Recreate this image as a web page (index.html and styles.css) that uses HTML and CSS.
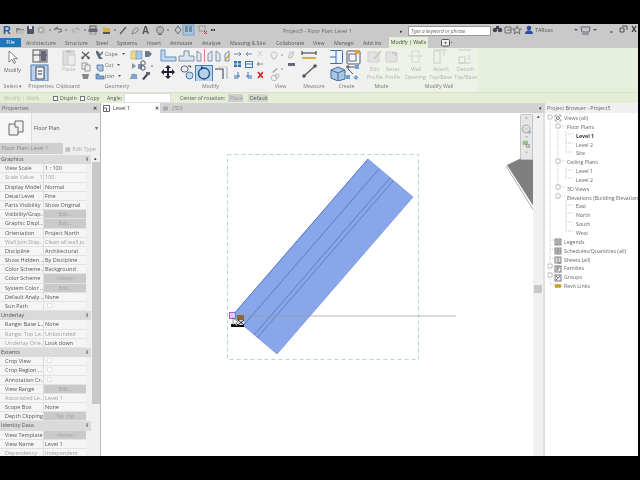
FILE: index.html
```html
<!DOCTYPE html>
<html lang="en">
<head>
<meta charset="utf-8">
<title>Project5 - Floor Plan: Level 1</title>
<link rel="stylesheet" href="styles.css">
</head>
<body>
<div class="app">
  <header class="titlebar">
    <svg class="qat" viewBox="0 24 225 13">
      <text x="3" y="34" class="logo">R</text>
      <path d="M16 28h3l1 1h4v1h-6l-2 4z" fill="#888"/><path d="M18 30h7l-2 4h-7z" fill="#bbb"/>
      <rect x="27" y="26" width="7" height="8" rx="1" fill="#4a5568"/><rect x="29" y="26" width="3" height="3" fill="#ddd"/>
      <circle cx="41" cy="30" r="3.6" fill="#aaa"/><circle cx="41" cy="30" r="1.4" fill="#ddd"/>
      <circle cx="50" cy="30" r=".8" fill="#555"/>
      <path d="M54 30l3-2.500v1.500h3c2 0 2 3 0 3h-2" fill="none" stroke="#667" stroke-width="1.100"/>
      <circle cx="66" cy="30" r=".8" fill="#555"/>
      <path d="M80 30l-3-2.500v1.500h-3c-2 0-2 3 0 3h2" fill="none" stroke="#aaa" stroke-width="1.100"/>
      <circle cx="85" cy="30" r=".8" fill="#555"/>
      <rect x="90" y="26" width="6" height="3" fill="none" stroke="#555"/><rect x="88.500" y="29" width="9" height="3" fill="#667"/><rect x="90" y="32" width="6" height="2" fill="#ddd" stroke="#555" stroke-width=".5"/>
      <path d="M103 27l4 1h3v5h-7z" fill="#d4b24a"/><rect x="103" y="32" width="7" height="2" fill="#555"/>
      <circle cx="115" cy="30" r=".8" fill="#555"/>
      <path d="M120 34l6-7" stroke="#555" stroke-width="1.200"/>
      <path d="M132 34l1-3c2-5 7-3 5 0l-3 2z" fill="none" stroke="#778" stroke-width=".9"/>
      <text x="142" y="34" class="qat-a">A</text>
      <circle cx="160" cy="30" r="3.500" fill="#bbb" stroke="#666" stroke-width=".8"/><path d="M158 34h4v1h-4z" fill="#666"/>
      <circle cx="168" cy="30" r=".8" fill="#555"/>
      <path d="M178 26l3 4-3 4-3-4z" fill="none" stroke="#667" stroke-width="1"/>
      <rect x="183" y="25" width="11" height="10" fill="#a9c6e6" stroke="#5f86b4" stroke-width=".6"/><path d="M185 27h3M185 29h3M185 31h3M189 27h3M189 29h3M189 31h3" stroke="#345" stroke-width=".9"/>
      <rect x="199" y="26" width="6" height="5" fill="#ccc" stroke="#777" stroke-width=".6"/><path d="M204 31l3 3M207 31l-3 3" stroke="#c33" stroke-width="1"/>
      <rect x="211" y="29" width="1.500" height="2" fill="#333"/><rect x="213.500" y="29" width="1.500" height="2" fill="#333"/>
    </svg>
    <span class="doc-title">Project5 - Floor Plan: Level 1</span>
    <span class="search-caret">▸</span>
    <span class="search">Type a keyword or phrase</span>
    <svg class="winctl" viewBox="492 24 146 13">
      <circle cx="496" cy="30" r="2.200" fill="#445"/><circle cx="501" cy="30" r="2.200" fill="#445"/><rect x="497" y="26" width="3" height="3" fill="#445"/>
      <path d="M506 27h6v6h-6zM508 30h4" fill="none" stroke="#556" stroke-width=".8"/>
      <path d="M518 26l1.300 3h3l-2.400 2 1 3-2.900-2-2.900 2 1-3-2.400-2h3z" fill="none" stroke="#556" stroke-width=".8"/>
      <circle cx="530" cy="28" r="2.300" fill="#2b4fa0"/><path d="M526 34c0-5 8-5 8 0z" fill="#2b4fa0"/>
      <text x="536" y="32" class="user">TARuss</text>
      <path d="M575 29l2 2 2-2z" fill="#556"/>
      <path d="M582 27h9l-1 5h-7zM583 34h7" fill="none" stroke="#667" stroke-width="1"/>
      <path d="M594 29l2 2 2-2z" fill="#556"/>
      <path d="M611 32h3" stroke="#444" stroke-width="1"/>
      <path d="M621 28h4v4h-4zM623 26h5v4" fill="none" stroke="#444" stroke-width=".9"/>
      <path d="M633 26l4 6M637 26l-4 6" stroke="#333" stroke-width="1.200"/>
    </svg>
  </header>

  <nav class="tabs">
    <span class="tab-file">File</span>
    <span class="tab t1">Architecture</span>
    <span class="tab t2">Structure</span>
    <span class="tab t3">Steel</span>
    <span class="tab t4">Systems</span>
    <span class="tab t5">Insert</span>
    <span class="tab t6">Annotate</span>
    <span class="tab t7">Analyze</span>
    <span class="tab t8">Massing &amp; Site</span>
    <span class="tab t9">Collaborate</span>
    <span class="tab t10">View</span>
    <span class="tab t11">Manage</span>
    <span class="tab t12">Add-Ins</span>
    <span class="tab-active">Modify | Walls</span>
    <svg class="tab-icon" viewBox="0 0 12 8"><rect x=".5" y=".5" width="8" height="6.500" rx="1" fill="#eee" stroke="#555"/><circle cx="4.500" cy="3.800" r="1" fill="#555"/><path d="M10 3l1.500 0-.75 1.500z" fill="#555"/></svg>
  </nav>

  <section class="ribbon">
    <div class="group g-select">
      <svg class="tools" viewBox="0 48 26 33">
        <path d="M9 51l0 11 3-2.500 2 4 1.500-.8-2-4h4z" fill="#fff" stroke="#666" stroke-width=".8"/>
        <text x="4" y="72" class="tool-text">Modify</text>
      </svg>
      <div class="group-label">Select ▾</div>
    </div>
    <div class="group g-props">
      <svg class="tools" viewBox="26 48 30 33">
        <rect x="33" y="50" width="14" height="12" fill="#eee" stroke="#555"/><path d="M33 55h14M40 50v12" stroke="#555"/><rect x="41" y="51" width="5" height="10" fill="#667"/>
        <rect x="31" y="65" width="17" height="16" fill="#b6d2ee" stroke="#4a7db0"/><rect x="36" y="67" width="8" height="12" fill="#f3f3f3" stroke="#445"/><path d="M38 71h4M38 74h4" stroke="#335" stroke-width="1.200"/>
      </svg>
      <div class="group-label">Properties</div>
    </div>
    <div class="group g-clip">
      <svg class="tools" viewBox="56 48 23 33">
        <rect x="63" y="51" width="11" height="14" fill="#ddd" stroke="#c8c8c8"/><rect x="66" y="50" width="5" height="3" fill="#c4c4c4"/><rect x="68" y="55" width="7" height="10" fill="#ececec" stroke="#ccc"/>
        <text x="62" y="71" class="tool-text dim">Paste</text>
      </svg>
      <div class="group-label">Clipboard</div>
    </div>
    <div class="group g-geo">
      <svg class="tools" viewBox="79 48 76 33">
        <path d="M82 52l7 6M89 52l-7 6" stroke="#555" stroke-width="1.200"/><circle cx="82.500" cy="58" r="1.200" fill="#555"/><circle cx="88.500" cy="58" r="1.200" fill="#555"/>
        <rect x="82" y="63" width="5" height="6" fill="#eee" stroke="#777" stroke-width=".7"/><rect x="85" y="65" width="5" height="6" fill="#eee" stroke="#777" stroke-width=".7"/>
        <path d="M82 74h7l-1 5h-5z" fill="#888"/>
        <path d="M96 51h2l2 3 3-3v2l-3 3 3 3h-4l-3-6z" fill="#5a6a80"/>
        <text x="105" y="56" class="tool-text">Cope</text><path d="M122 53l1.500 2 1.500-2z" fill="#555"/>
        <path d="M97 69v-4h6v6h-4z" fill="#a9c6e6" stroke="#456d9c" stroke-width=".8"/>
        <text x="105" y="67" class="tool-text">Cut</text><path d="M117 64l1.500 2 1.500-2z" fill="#555"/>
        <path d="M96 79v-5h3v2h5v3z" fill="#7ea6d4" stroke="#456d9c" stroke-width=".7"/>
        <text x="105" y="78" class="tool-text">Join</text><path d="M118 75l1.500 2 1.500-2z" fill="#555"/>
        <path d="M131 51h6v8h-6z" fill="#efd98a" stroke="#bba750" stroke-width=".6"/><rect x="136" y="51" width="6" height="8" fill="#a9c6e6" stroke="#6d93bd" stroke-width=".6"/>
        <path d="M149 51l3 3-3 3h-4v-6z" fill="#6b7a8a"/>
        <path d="M132 63l4 3-4 3zM138 64h4v5h-4z" fill="#7d95a8"/>
        <circle cx="143" cy="63" r="2.200" fill="none" stroke="#556"/><circle cx="143" cy="68" r="2.200" fill="none" stroke="#556"/><circle cx="152" cy="66" r=".8" fill="#555"/>
        <path d="M129 79l5-6 4 6z" fill="#9dbb55"/><rect x="131" y="74" width="6" height="5" fill="#7fa0d0"/>
        <path d="M142 79l5-6 2 1-5 6z" fill="#445"/><rect x="146" y="72" width="4" height="3" fill="#667"/>
      </svg>
      <div class="group-label">Geometry</div>
    </div>
    <div class="group g-modify">
      <svg class="tools" viewBox="158 48 105 33">
        <path d="M161 50v11h15v-4h-11v-7z" fill="#c4d9ee" stroke="#4a7db0" stroke-width=".8"/>
        <path d="M179 61v-5h5v-5h5v5h5v5z" fill="#dbe6f2" stroke="#6b7f96" stroke-width=".8"/>
        <path d="M197 51l4 3v7h-4zM212 51l-4 3v7h4z" fill="#e2ebf4" stroke="#6b7f96" stroke-width=".8"/><path d="M204.500 49v13" stroke="#c66" stroke-width=".8"/>
        <path d="M216 51l4 3v7h-4zM229 51l-4 3v7h4z" fill="#e2ebf4" stroke="#6b7f96" stroke-width=".8"/><path d="M225 60l5-6" stroke="#d4a83a" stroke-width="1.200"/>
        <path d="M168 65l3 3h-2v3h3v-2l3 3-3 3v-2h-3v3h2l-3 3-3-3h2v-3h-3v2l-3-3 3-3v2h3v-3h-2z" fill="#223"/>
        <rect x="181" y="66" width="7" height="6" rx="3" fill="none" stroke="#667"/><rect x="186" y="72" width="7" height="7" rx="3.500" fill="#c4d9ee" stroke="#4a76a8"/><path d="M188 66h3l-1 2" fill="none" stroke="#333" stroke-width=".8"/>
        <rect x="195.500" y="65.500" width="17" height="16" fill="#b6d2ee" stroke="#4a7db0"/><circle cx="204" cy="73.500" r="5.500" fill="none" stroke="#1f4a78" stroke-width="1.300"/><path d="M201 66l3 2-3 2z" fill="#1f4a78"/>
        <path d="M215 69h8v10" fill="none" stroke="#445" stroke-width="1.100"/><path d="M227 67v12" stroke="#9ab" stroke-width="1"/><path d="M218 67h9" stroke="#dca" stroke-width="1"/>
        <path d="M234 54h6m-1-2 2 2-2 2M247 54h5m-4-2-2 2 2 2" fill="none" stroke="#5a93c8" stroke-width="1"/>
        <path d="M258 51l4 5M258 56l4-5" stroke="#ccc" stroke-width="1"/>
        <rect x="234" y="61" width="7" height="6" fill="#2f72b5"/><path d="M234 64h7M237.500 61v6" stroke="#fff" stroke-width=".8"/>
        <rect x="245.500" y="61.500" width="7" height="6" fill="none" stroke="#3a78b8"/><path d="M245 64h8" stroke="#3a78b8"/>
        <path d="M257 64h7m-5-2-2 2 2 2" fill="none" stroke="#777" stroke-width=".9"/>
        <path d="M234 76h6M238 72v6h-4" fill="none" stroke="#3a78b8" stroke-width="1"/>
        <path d="M246 76h6M248 72v6h4" fill="none" stroke="#3a78b8" stroke-width="1"/>
        <path d="M258 72l5 6M263 72l-5 6" stroke="#c22" stroke-width="1.700"/>
      </svg>
      <div class="group-label">Modify</div>
    </div>
    <div class="group g-view">
      <svg class="tools" viewBox="263 48 35 33">
        <path d="M274 52c3 0 4 3 2 5l-1 2h-2l-1-2c-2-2-1-5 2-5z" fill="#eee" stroke="#bbb"/><circle cx="282" cy="55" r=".8" fill="#888"/>
        <path d="M288 58l2-6h4l-2 6z" fill="#ddd" stroke="#bbb" stroke-width=".7"/>
        <path d="M272 72l5-4 1 1-5 4z" fill="#aaa"/><circle cx="282" cy="69" r=".8" fill="#888"/>
        <rect x="288" y="63" width="7" height="3" fill="#667"/>
        <circle cx="274" cy="78" r="2.800" fill="none" stroke="#bbb"/><circle cx="277" cy="76" r="2" fill="none" stroke="#bbb"/>
      </svg>
      <div class="group-label">View</div>
    </div>
    <div class="group g-measure">
      <svg class="tools" viewBox="298 48 32 33">
        <path d="M302 53h14" stroke="#333"/><path d="M302 51v4M316 51v4" stroke="#333"/><rect x="302" y="57" width="14" height="2" fill="#d4b24a"/>
        <path d="M305 75l9-8" stroke="#555" stroke-width="1.400"/><circle cx="304" cy="76" r="1.800" fill="#555"/><circle cx="315" cy="66" r="1.800" fill="#555"/>
      </svg>
      <div class="group-label">Measure</div>
    </div>
    <div class="group g-create">
      <svg class="tools" viewBox="330 48 33 33">
        <rect x="329.500" y="50.500" width="13" height="13" rx="1" fill="#eef4fa" stroke="#3f6b9d"/><path d="M330 57h6M336 51v12" stroke="#3f6b9d"/>
        <rect x="347" y="51" width="13" height="13" rx="1" fill="#f4f7fb" stroke="#556"/><rect x="349" y="54" width="7" height="7" fill="none" stroke="#667"/><circle cx="357" cy="52" r="2.200" fill="#e89a2c"/>
        <path d="M331 70l7-3 7 3v9l-7 2-7-3z" fill="#a9c6e6" stroke="#456d9c"/><path d="M331 70l7 3 7-3M338 73v8" fill="none" stroke="#456d9c"/>
        <circle cx="348" cy="67" r="1.800" fill="#667"/><rect x="355" y="65" width="4" height="4" fill="#6fa3d6"/><path d="M350 67h5M348 69l5 5" stroke="#555"/><rect x="346" y="75" width="4" height="4" fill="#6fa3d6"/><path d="M356 75l2.500 2.500-2.500 2.500-2.500-2.500z" fill="#6fa3d6"/>
      </svg>
      <div class="group-label">Create</div>
    </div>
    <div class="group g-mode">
      <svg class="tools" viewBox="363 48 37 33">
        <path d="M368 52h9l2 2v8h-11z" fill="#e2e2e2" stroke="#cfcfcf"/><path d="M374 59l7-8" stroke="#c8c8c8" stroke-width="1.600"/>
        <path d="M386 52h9l2 2v8h-11z" fill="#e2e2e2" stroke="#cfcfcf"/><path d="M392 53h5l-2 3" fill="none" stroke="#bbb"/>
        <text x="370" y="71" class="tool-text dim">Edit</text><text x="367" y="79" class="tool-text dim">Profile</text>
        <text x="386" y="71" class="tool-text dim">Reset</text><text x="385" y="79" class="tool-text dim">Profile</text>
      </svg>
      <div class="group-label">Mode</div>
    </div>
    <div class="group g-wall">
      <svg class="tools" viewBox="400 48 78 33">
        <rect x="412" y="51" width="7" height="11" fill="none" stroke="#d2d6cc"/><path d="M408 56h15" stroke="#d2d6cc"/>
        <rect x="434" y="51" width="6" height="12" fill="none" stroke="#c8ccc2"/><path d="M434 50h13M444 51v5" stroke="#c8ccc2"/>
        <path d="M458 50h13M458 63h13" stroke="#c8ccc2"/><rect x="459" y="57" width="6" height="6" fill="none" stroke="#c8ccc2"/><path d="M469 55v5" stroke="#c8ccc2"/>
        <text x="411" y="71" class="tool-text dim">Wall</text><text x="405" y="79" class="tool-text dim">Opening</text>
        <text x="433" y="71" class="tool-text dim">Attach</text><text x="429" y="79" class="tool-text dim">Top/Base</text>
        <text x="457" y="71" class="tool-text dim">Detach</text><text x="454" y="79" class="tool-text dim">Top/Base</text>
      </svg>
      <div class="group-label">Modify Wall</div>
    </div>
  </section>

  <section class="options">
    <span class="opt-context">Modify | Walls</span>
    <label class="opt-check opt-disjoin"><span class="box"></span>Disjoin</label>
    <label class="opt-check"><span class="box"></span>Copy</label>
    <span class="opt-angle">Angle:</span>
    <span class="opt-input"></span>
    <span class="opt-center">Center of rotation:</span>
    <span class="opt-btn opt-place">Place</span>
    <span class="opt-btn opt-default">Default</span>
  </section>

  <main class="workspace">
    <aside class="props">
      <div class="panel-head"><span>Properties</span><span class="close">✕</span></div>
      <div class="type-sel">
        <div class="type-thumb"><svg width="16" height="16" viewBox="0 0 16 16"><path d="M1 4h6v-3h8v11h-5v3h-9z" fill="#f2f2f2" stroke="#666"/><path d="M7 4v3h3v5" fill="none" stroke="#666"/></svg></div>
        <span class="type-name">Floor Plan</span>
        <span class="type-arrow">▾</span>
      </div>
      <div class="inst-row"><span class="inst-name">Floor Plan: Level 1</span><span class="edit-type">▦ Edit Type</span></div>
      <div class="prop-body">
        <div class="prop-grid">
          <div class="section">Graphics<i>⇞</i></div>
          <div class="n">View Scale</div><div class="v">1 : 100</div>
          <div class="n dim">Scale Value&nbsp; &nbsp; 1:</div><div class="v dim">100</div>
          <div class="n">Display Model</div><div class="v">Normal</div>
          <div class="n">Detail Level</div><div class="v">Fine</div>
          <div class="n">Parts Visibility</div><div class="v">Show Original</div>
          <div class="n">Visibility/Grap...</div><div class="v b">Edit...</div>
          <div class="n">Graphic Displ...</div><div class="v b">Edit...</div>
          <div class="n">Orientation</div><div class="v">Project North</div>
          <div class="n dim">Wall Join Disp...</div><div class="v dim">Clean all wall jo...</div>
          <div class="n">Discipline</div><div class="v">Architectural</div>
          <div class="n">Show Hidden ...</div><div class="v">By Discipline</div>
          <div class="n">Color Scheme...</div><div class="v">Background</div>
          <div class="n">Color Scheme</div><div class="v b">&lt;none&gt;</div>
          <div class="n">System Color ...</div><div class="v b">Edit...</div>
          <div class="n">Default Analy...</div><div class="v">None</div>
          <div class="n">Sun Path</div><div class="v"><span class="cb"></span></div>
          <div class="section">Underlay<i>⇞</i></div>
          <div class="n">Range: Base L...</div><div class="v">None</div>
          <div class="n dim">Range: Top Le...</div><div class="v dim">Unbounded</div>
          <div class="n dim">Underlay Orie...</div><div class="v">Look down</div>
          <div class="section">Extents<i>⇞</i></div>
          <div class="n">Crop View</div><div class="v"><span class="cb"></span></div>
          <div class="n">Crop Region ...</div><div class="v"><span class="cb"></span></div>
          <div class="n">Annotation Cr...</div><div class="v"><span class="cb"></span></div>
          <div class="n">View Range</div><div class="v b">Edit...</div>
          <div class="n dim">Associated Le...</div><div class="v dim">Level 1</div>
          <div class="n">Scope Box</div><div class="v">None</div>
          <div class="n">Depth Clipping</div><div class="v b">No clip</div>
          <div class="section">Identity Data<i>⇞</i></div>
          <div class="n">View Template</div><div class="v b">&lt;None&gt;</div>
          <div class="n">View Name</div><div class="v">Level 1</div>
          <div class="n dim">Dependency</div><div class="v dim">Independent</div>
        </div>
        <div class="prop-scroll"><span class="arrow-up">▴</span><div class="prop-thumb"></div></div>
      </div>
    </aside>

    <section class="view">
      <div class="view-tabs">
        <span class="view-tab active"><svg width="7" height="7" viewBox="0 0 7 7"><path d="M.5.5h6v6h-6zM.5 3h3v3.500" fill="none" stroke="#667"/></svg>Level 1<span class="close">✕</span></span>
        <span class="view-tab"><svg width="7" height="7" viewBox="0 0 7 7"><path d="M1 2l3-1 2 1v3l-3 1-2-1z" fill="#aaa"/></svg>{3D}</span>
        <span class="view-menu">▾</span>
      </div>
      <div class="view-body">
        <div class="canvas">
          <svg class="drawing" viewBox="101 113 432 343">
            <rect x="227.500" y="154.500" width="191" height="205" fill="none" stroke="#b4d8d0" stroke-dasharray="4 3"/>
            <path d="M534 152l-27 13 27 42z" fill="#7f7f7f"/>
            <path d="M507 167l27 43" stroke="#fff" stroke-width="1.200"/><path d="M506 166l28 45" stroke="#555" stroke-width=".5"/>
            <path d="M368 159l45 38-136 157-45-38z" fill="#8aa6ea"/>
            <path d="M232 316l136-157" stroke="#4e6fc4" stroke-width="1" fill="none"/>
            <path d="M368 159l45 38-136 157-45-38" stroke="#6f8cd8" stroke-width=".7" fill="none"/>
            <path d="M379 169l-136 157M390 178l-136 157M393 181l-136 157" stroke="#4e66b0" stroke-width=".7" fill="none"/>
            <path d="M233 316h223" stroke="#9598a2" stroke-width=".7"/>
            <rect x="229.500" y="312.500" width="6" height="6" fill="#e3c8f0" stroke="#a860d8"/>
            <rect x="237" y="315" width="7" height="5" fill="#8a6a2a"/>
            <rect x="231" y="324" width="13" height="3" fill="#000"/>
            <path d="M233 318l0 7 2-1.500 1.500 2.500 1-.6-1.500-2.500h3z" fill="#fff" stroke="#333" stroke-width=".5"/>
            <path d="M238 320h6v5h-6z" fill="#ddd"/><path d="M238 320l6 5M244 320l-6 5" stroke="#222"/>
          </svg>
          <div class="navbar">
            <span class="nav-x">×</span>
            <svg width="11" height="36" viewBox="0 0 13 36">
              <circle cx="6" cy="6" r="4.500" fill="none" stroke="#aaa" stroke-width="1.300"/><circle cx="6" cy="6" r="2" fill="#ccc"/><circle cx="10" cy="10" r="1.600" fill="#8ab3d8"/>
              <path d="M5 15l1.500 1.500 1.500-1.500z" fill="#888"/>
              <rect x="2" y="20" width="6" height="5" fill="#9cc08a"/><circle cx="8" cy="26" r="2" fill="none" stroke="#777"/>
              <path d="M5 33l1.500 1.500 1.500-1.500z" fill="#888"/>
            </svg>
          </div>
        </div>
        <div class="view-scroll"><span class="arrow-up">▴</span><div class="view-thumb"></div></div>
      </div>
    </section>

    <aside class="browser">
      <div class="panel-head browser-head"><span>Project Browser - Project5</span></div>
      <div class="tree">
        <svg class="tree-lines" viewBox="545 113 93 180">
          <g fill="none" stroke="#c8c8c8" stroke-width="1" stroke-dasharray="1 1">
            <path d="M550 122v155M550 117h5M558 122v78M558 126h7M558 161h7M558 187h7M558 196h7M566 131v21M566 134h8M566 143h8M566 152h8M566 166v12M566 170h8M566 178h8M566 200v31M566 205h8M566 213h8M566 222h8M566 231h8M550 240h5M550 249h5M550 258h5M550 266h5M550 275h5M550 277v7h8"/>
          </g>
          <g fill="#fff" stroke="#aaa" stroke-width=".7">
            <rect x="548" y="115" width="4" height="4"/><rect x="556" y="124" width="4" height="4"/><rect x="556" y="159" width="4" height="4"/><rect x="556" y="185" width="4" height="4"/><rect x="556" y="194" width="4" height="4"/><rect x="548" y="264" width="4" height="4"/><rect x="548" y="273" width="4" height="4"/>
          </g>
        </svg>
        <div class="tr l0 has-ic"><svg class="ic" viewBox="0 0 8 8"><path d="M1 1h2M5 1h2M1 7h2M5 7h2M1 1v2M7 1v2M1 5v2M7 5v2" stroke="#888" stroke-width=".7"/><circle cx="4" cy="4" r="1.500" fill="none" stroke="#777"/></svg>Views (all)</div>
        <div class="tr l1">Floor Plans</div>
        <div class="tr l2 cur">Level 1</div>
        <div class="tr l2">Level 2</div>
        <div class="tr l2">Site</div>
        <div class="tr l1">Ceiling Plans</div>
        <div class="tr l2">Level 1</div>
        <div class="tr l2">Level 2</div>
        <div class="tr l1">3D Views</div>
        <div class="tr l1">Elevations (Building Elevation</div>
        <div class="tr l2">East</div>
        <div class="tr l2">North</div>
        <div class="tr l2">South</div>
        <div class="tr l2">West</div>
        <div class="tr l0 has-ic"><svg class="ic" viewBox="0 0 8 8"><rect x="1" y="1" width="6" height="6" fill="#ccc" stroke="#888"/><path d="M2 3h4M2 5h4" stroke="#888"/></svg>Legends</div>
        <div class="tr l0 has-ic"><svg class="ic" viewBox="0 0 8 8"><rect x="1" y="1" width="6" height="6" fill="#ddd" stroke="#888"/><path d="M1 3h6M1 5h6M4 1v6" stroke="#888"/></svg>Schedules/Quantities (all)</div>
        <div class="tr l0 has-ic"><svg class="ic" viewBox="0 0 8 8"><rect x="1" y="1" width="6" height="6" fill="#ddd" stroke="#888"/><path d="M4 1v6h3" stroke="#888" fill="none"/></svg>Sheets (all)</div>
        <div class="tr l0 has-ic"><svg class="ic" viewBox="0 0 8 8"><rect x="1" y="1" width="6" height="6" fill="#eee" stroke="#778"/><path d="M3 6v-4h3M3 4h2" stroke="#778" fill="none"/></svg>Families</div>
        <div class="tr l0 has-ic"><svg class="ic" viewBox="0 0 8 8"><rect x="1" y="1" width="6" height="6" fill="#eee" stroke="#778"/><path d="M2 6l4-4M2 2l2 2" stroke="#778" fill="none"/></svg>Groups</div>
        <div class="tr l0 has-ic"><svg class="ic" viewBox="0 0 8 8"><circle cx="2.500" cy="4" r="2" fill="#c9a02c"/><circle cx="5.500" cy="4" r="2" fill="#c9a02c"/></svg>Revit Links</div>
      </div>
    </aside>
  </main>
</div>
</body>
</html>
```
FILE: styles.css
```css
* { box-sizing: border-box; }
html, body { margin: 0; height: 100%; background: #000; overflow: hidden; }
body { font-family: "Open Sans", "Noto Sans", sans-serif; font-size: 5.25px; color: #555; }

.app {
  margin-top: 24px;
  width: 638px;
  height: 432px;
  display: flex;
  flex-direction: column;
  background: #f0f0f0;
  filter: blur(.3px);
}

/* title bar */
.titlebar { height: 13px; background: #c9c9c9; display: flex; align-items: center; flex: none; position: relative; }
.qat { width: 225px; height: 13px; flex: none; }
.logo { font: bold 11px "Liberation Sans", sans-serif; fill: #2a5a9c; }
.qat-a { font: bold 10px "Liberation Sans", sans-serif; fill: #555; }
.user { font-family: "Open Sans", sans-serif; font-size: 5.250px; fill: #555; }
.doc-title { margin-left: 58px; width: 117px; color: #666; white-space: nowrap; }
.search-caret { width: 8px; color: #333; font-size: 5px; }
.search { width: 83px; height: 10px; background: #fff; border: 1px solid #999; color: #666; font-size: 4.800px; line-height: 8px; padding-left: 2px; white-space: nowrap; font-style: italic; }
.winctl { width: 146px; height: 13px; flex: none; }

/* ribbon tabs */
.tabs { height: 11px; background: #c9c9c9; display: flex; align-items: center; flex: none; position: relative; color: #555; }
.tab-file { width: 21px; height: 9px; background: #1f77ba; color: #fff; text-align: center; line-height: 9px; }
.tab { white-space: nowrap; }
.t1 { margin-left: 5px; width: 39px; }
.t2 { width: 31px; }
.t3 { width: 21px; }
.t4 { width: 30px; }
.t5 { width: 23px; }
.t6 { width: 32px; }
.t7 { width: 28px; }
.t8 { width: 46px; }
.t9 { width: 37px; }
.t10 { width: 21px; }
.t11 { width: 29px; }
.t12 { width: 26px; }
.tab-active { width: 39px; height: 11px; background: #e6f0d8; text-align: center; line-height: 11px; white-space: nowrap; color: #444; }
.tab-icon { width: 12px; height: 8px; margin-left: 13px; }

/* ribbon */
.ribbon { height: 44px; display: flex; flex: none; background: linear-gradient(90deg, #f1f1f1 0, #f1f1f1 355px, #eef2e8 380px, #eef2e8 476px, #e7f0dc 480px); }
.group { display: flex; flex-direction: column; flex: none; }
.tools { height: 33px; width: 100%; display: block; flex: none; }
.tool-text { font-family: "Open Sans", sans-serif; font-size: 5.250px; fill: #666; }
.tool-text.dim { fill: #b4b4b4; }
.group-label { height: 10px; line-height: 10px; text-align: center; color: #777; white-space: nowrap; }
.g-select { width: 26px; }
.g-props { width: 30px; }
.g-clip { width: 23px; }
.g-geo { width: 76px; }
.g-modify { width: 105px; margin-left: 3px; }
.g-view { width: 35px; }
.g-measure { width: 32px; }
.g-create { width: 33px; }
.g-mode { width: 37px; }
.g-wall { width: 78px; }

/* options bar */
.options { height: 11px; background: #e4eed6; display: flex; align-items: center; flex: none; border-top: 1px solid #d8dfcc; color: #555; white-space: nowrap; }
.opt-context { margin-left: 4px; width: 46px; color: #b5bfa8; }
.opt-check { display: flex; align-items: center; gap: 1px; width: 27px; }
.opt-disjoin { margin-left: 3px; }
.box { width: 5px; height: 5px; border: 1px solid #777; background: #fff; margin-right: 1px; }
.opt-angle { width: 17px; }
.opt-input { width: 47px; height: 10px; background: #fff; border: 1px solid #ddd; }
.opt-center { margin-left: 9px; width: 48px; }
.opt-btn { height: 8px; line-height: 8px; padding: 0 2px; background: #d4d8cc; color: #555; }
.opt-place { width: 15px; color: #999; background: #cfcfcf; }
.opt-default { width: 20px; margin-left: 5px; }

/* workspace */
.workspace { flex: 1; display: flex; min-height: 0; }
.panel-head { height: 10px; display: flex; align-items: center; justify-content: space-between; padding: 0 3px 0 2px; background: #d2d2d2; color: #666; flex: none; }
.close { font-size: 5px; color: #333; font-weight: bold; }

.props { width: 101px; flex: none; display: flex; flex-direction: column; background: #f0f0f0; border-right: 1px solid #bbb; overflow: hidden; font-size: 5.500px; }
.type-sel { height: 30px; display: flex; align-items: center; flex: none; }
.type-thumb { width: 32px; height: 30px; background: #f7f7f7; border-right: 1px solid #ddd; display: flex; align-items: center; justify-content: center; }
.type-name { margin-left: 2px; flex: 1; }
.type-arrow { margin-right: 2px; color: #666; }
.inst-row { height: 11px; display: flex; align-items: center; flex: none; }
.inst-name { width: 63px; height: 11px; line-height: 11px; background: #cfcfcf; color: #888; padding-left: 2px; white-space: nowrap; }
.edit-type { margin-left: 2px; color: #aaa; white-space: nowrap; }
.prop-body { flex: 1; display: flex; min-height: 0; margin-top: 1px; }
.prop-grid { width: 91px; flex: none; display: grid; grid-template-columns: 44px 47px; grid-auto-rows: 9.200px; align-content: start; }
.section { grid-column: 1 / -1; background: #dadada; padding-left: 1px; color: #555; line-height: 9.200px; display: flex; justify-content: space-between; padding-right: 2px; }
.section i { font-style: normal; font-size: 5px; }
.n, .v { line-height: 9px; white-space: nowrap; overflow: hidden; border-bottom: 1px solid #e2e2e2; background: #f5f5f5; }
.n { padding-left: 5px; border-right: 1px solid #ddd; }
.v { padding-left: 1px; margin-right: 5px; }
.dim { color: #a0a0a0; }
.b { background: #cacaca; color: #a0a0a0; text-align: center; }
.cb { display: inline-block; width: 5px; height: 5px; background: #fff; border: 1px solid #e4e4e4; margin: 1px 0 0 2px; }
.prop-scroll { width: 9px; flex: none; background: #f0f0f0; display: flex; flex-direction: column; align-items: center; }
.arrow-up { font-size: 5px; height: 7px; line-height: 7px; color: #444; }
.prop-thumb { width: 8px; height: 242px; background: #c8c8c8; }

.view { flex: 1; min-width: 0; display: flex; flex-direction: column; }
.view-tabs { height: 10px; display: flex; flex: none; background: #d2d2d2; align-items: center; }
.view-tab { display: flex; align-items: center; gap: 3px; height: 10px; padding-left: 2px; color: #888; white-space: nowrap; }
.view-tab.active { width: 59px; background: #fff; color: #333; }
.view-tab.active .close { margin-left: auto; margin-right: 1px; }
.view-menu { margin-left: auto; margin-right: 3px; color: #333; }
.view-body { flex: 1; display: flex; min-height: 0; }
.canvas { flex: 1; background: #fff; position: relative; overflow: hidden; min-width: 0; }
.drawing { width: 432px; height: 343px; display: block; }
.navbar { position: absolute; top: 1px; right: 0; width: 13px; height: 46px; background: #e6e6e6; border: 1px solid #c4c4c4; border-radius: 2px 0 0 2px; display: flex; flex-direction: column; align-items: center; }
.nav-x { font-size: 5px; line-height: 6px; color: #888; }
.view-scroll { width: 12px; flex: none; background: #f1f1f1; display: flex; flex-direction: column; align-items: center; border-right: 2px solid #e0e0e0; }
.view-thumb { width: 8px; height: 8px; margin-top: 165px; background: #c8c8c8; }

.browser { width: 93px; flex: none; display: flex; flex-direction: column; background: #fff; overflow: hidden; }
.browser-head { background: #f0f0f0; white-space: nowrap; }
.tree { position: relative; padding-top: 1px; flex: 1; }
.tree-lines { position: absolute; left: 0; top: 0; width: 93px; height: 180px; }
.tr { height: 8.850px; line-height: 8.850px; white-space: nowrap; position: relative; color: #666; display: flex; align-items: center; }
.l0 { padding-left: 19px; }
.l1 { padding-left: 22px; }
.l2 { padding-left: 31px; }
.cur { font-weight: 700; color: #333; }
.has-ic { padding-left: 9px; }
.ic { width: 8px; height: 8px; margin: 0 2px 0 0; position: relative; }
```
